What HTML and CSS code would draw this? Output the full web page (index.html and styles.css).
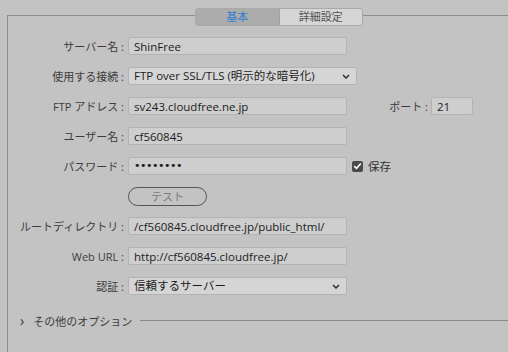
FILE: index.html
```html
<!DOCTYPE html>
<html lang="ja">
<head>
    <meta charset="UTF-8">
    <title>サイト設定 - サーバー</title>
    <link rel="stylesheet" href="styles.css">
</head>
<body>

    <div class="panel">
        <div class="tabs">
            <div class="tab active">基本</div>
            <div class="tab">詳細設定</div>
        </div>

        <div class="form">
            <div class="row">
                <div class="label">サーバー名 :</div>
                <div class="field">ShinFree</div>
            </div>

            <div class="row">
                <div class="label">使用する接続 :</div>
                <div class="field select wide">
                    <span>FTP over SSL/TLS (明示的な暗号化)</span>
                    <svg class="chev" width="8" height="5" viewBox="0 0 8 5"><path d="M1 1 L4 4 L7 1" fill="none" stroke="#222" stroke-width="1.3"/></svg>
                </div>
            </div>

            <div class="row">
                <div class="label">FTP アドレス :</div>
                <div class="field">sv243.cloudfree.ne.jp</div>
                <div class="port-label">ポート :</div>
                <div class="field port">21</div>
            </div>

            <div class="row">
                <div class="label">ユーザー名 :</div>
                <div class="field">cf560845</div>
            </div>

            <div class="row">
                <div class="label">パスワード :</div>
                <div class="field dots">••••••••</div>
                <div class="check">
                    <svg width="9" height="8" viewBox="0 0 9 8"><path d="M1.2 4.2 L3.5 6.4 L7.8 1.4" fill="none" stroke="#fff" stroke-width="1.6"/></svg>
                </div>
                <div class="check-label">保存</div>
            </div>

            <div class="row">
                <div class="label"></div>
                <div class="button">テスト</div>
            </div>

            <div class="row">
                <div class="label">ルートディレクトリ :</div>
                <div class="field">/cf560845.cloudfree.jp/public_html/</div>
            </div>

            <div class="row">
                <div class="label">Web URL :</div>
                <div class="field">http://cf560845.cloudfree.jp/</div>
            </div>

            <div class="row">
                <div class="label">認証 :</div>
                <div class="field select">
                    <span>信頼するサーバー</span>
                    <svg class="chev" width="8" height="5" viewBox="0 0 8 5"><path d="M1 1 L4 4 L7 1" fill="none" stroke="#222" stroke-width="1.3"/></svg>
                </div>
            </div>
        </div>

        <div class="more">
            <span class="arrow">›</span>
            <span class="more-text">その他のオプション</span>
            <span class="rule"></span>
        </div>
    </div>

</body>
</html>
```

FILE: styles.css
```css
body {
    margin: 0;
    background-color: #c3c3c3;
    font-family: "Open Sans", "Noto Sans CJK JP", sans-serif;
    font-size: 11px;
    color: #3a3a3a;
}
.panel {
    margin: 15px 0 0 7px;
    border-top: 1px solid #8e8e8e;
    border-left: 1px solid #8e8e8e;
    height: 336px;
}
.tabs {
    display: flex;
    margin: -8px 0 0 187px;
    width: 168px;
    height: 18px;
    border: 1px solid #a9a9a9;
    border-radius: 3px;
    overflow: hidden;
    box-sizing: border-box;
}
.tab {
    flex: 1;
    background-color: #d6d6d6;
    color: #555;
    text-align: center;
    line-height: 16px;
    font-size: 11px;
}
.tab.active {
    background-color: #acacac;
    color: #2f7fd0;
    border-right: 1px solid #a2a2a2;
}
.form {
    display: flex;
    flex-direction: column;
    gap: 12px;
    margin-top: 11px;
}
.row {
    display: flex;
    align-items: center;
    height: 18px;
}
.label {
    width: 116px;
    text-align: right;
    margin-right: 4px;
    white-space: nowrap;
    color: #3c3c3c;
}
.field {
    width: 219px;
    height: 18px;
    box-sizing: border-box;
    background-color: #cecece;
    border: 1px solid #b3b3b3;
    border-radius: 2px;
    padding: 1px 0 0 5px;
    line-height: 16px;
    font-size: 11.5px;
    color: #1c1c1c;
    white-space: nowrap;
    overflow: hidden;
}
.select {
    display: flex;
    justify-content: space-between;
    align-items: center;
    background-color: #d5d5d5;
    padding: 0 6px 0 5px;
}
.select.wide {
    width: 229px;
}
.port-label {
    margin-left: 40px;
    width: 41px;
    text-align: right;
    margin-right: 3px;
}
.field.port {
    width: 42px;
}
.field.dots {
    font-family: "DejaVu Sans", sans-serif;
    font-size: 11px;
    letter-spacing: -0.5px;
    padding-top: 0;
}
.check {
    width: 11px;
    height: 11px;
    margin-left: 5px;
    background-color: #4a4a4a;
    border-radius: 2px;
    display: flex;
    align-items: center;
    justify-content: center;
}
.check-label {
    margin-left: 5px;
    font-size: 11.5px;
    color: #333;
}
.button {
    width: 79px;
    height: 19px;
    box-sizing: border-box;
    border: 1px solid #555;
    border-radius: 10px;
    text-align: center;
    line-height: 17px;
    color: #7a7a7a;
}
.more {
    display: flex;
    align-items: center;
    margin-top: 16px;
}
.arrow {
    margin-left: 12px;
    font-size: 14px;
    color: #333;
}
.more-text {
    margin-left: 9px;
    color: #3c3c3c;
}
.rule {
    flex: 1;
    margin-left: 8px;
    border-top: 1px solid #888;
}
```
